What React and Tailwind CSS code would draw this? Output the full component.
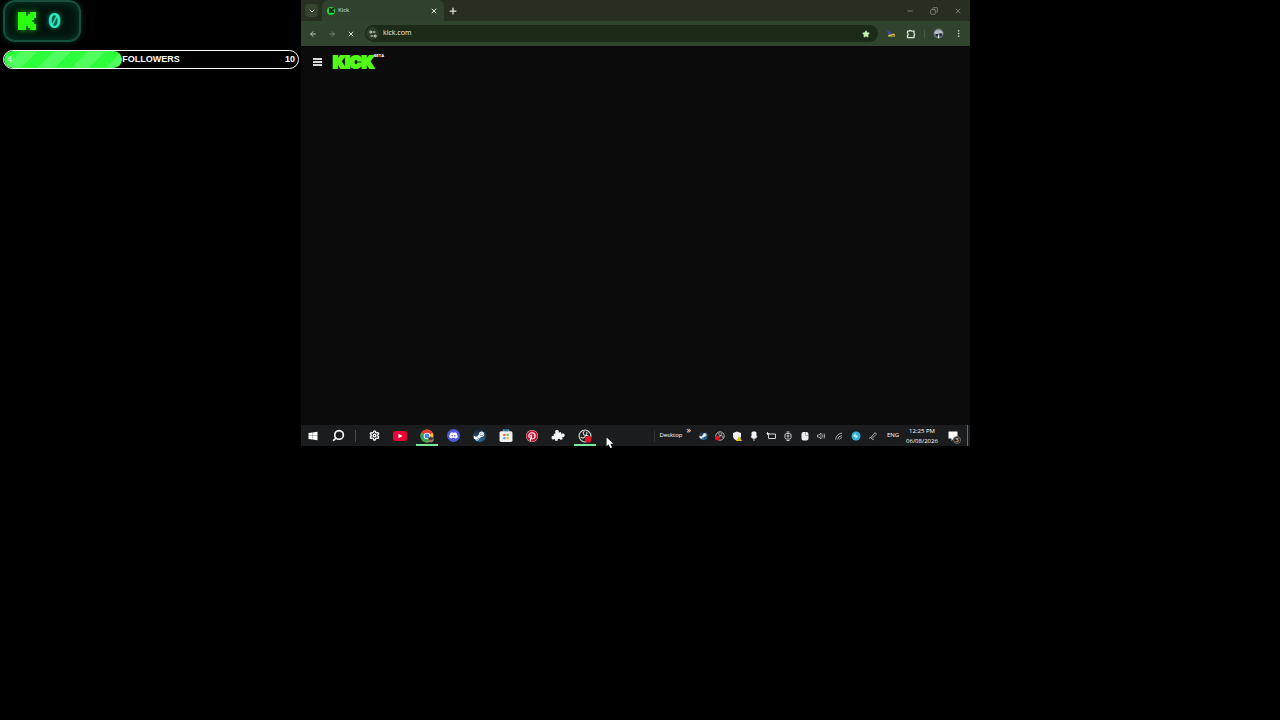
import {
  ArrowLeft,
  ArrowRight,
  ChevronDown,
  Copy,
  MoreVertical,
  Minus,
  Plus,
  Search,
  Settings,
  Star,
  X,
} from "lucide-react";
import { FaDiscord, FaPinterest, FaSteamSymbol } from "react-icons/fa";
import clsx from "clsx";

// Blocky square mark used in the counter and as the tab icon
function KickMark({ className }) {
  return (
    <svg viewBox="0 0 9 9" className={className} fill="currentColor" aria-hidden="true">
      <path d="M0 0h4v2h1V1h1V0h3v3H8v1H7v1h1v1h1v3H6V8H5V7H4v2H0z" />
    </svg>
  );
}

function ChromeIcon() {
  return (
    <svg viewBox="0 0 26 26" className="size-[14px]" aria-hidden="true">
      <circle cx="13" cy="13" r="12" fill="#fbc116" />
      <path d="M13 13 2.6 7a12 12 0 0 1 20.8 0z" fill="#e33b2e" />
      <path d="M13 13 2.6 7A12 12 0 0 0 13 25l5-9z" fill="#2da94f" />
      <circle cx="13" cy="13" r="6" fill="#fff" />
      <circle cx="13" cy="13" r="4.6" fill="#4285f4" />
      <circle cx="20" cy="19.500" r="5.500" fill="#8b7b63" />
      <path d="M16 18q4-5 8 0l-1 2h-6z" fill="#34302c" />
    </svg>
  );
}

function YoutubeIcon() {
  return (
    <svg viewBox="0 0 28 20" className="w-[14px]" aria-hidden="true">
      <rect width="28" height="20" rx="5" fill="#e8033a" />
      <path d="M11 5.500v9l8-4.500z" fill="#fff" />
    </svg>
  );
}

function StoreIcon() {
  return (
    <svg viewBox="0 0 26 26" className="size-[14px]" aria-hidden="true">
      <path d="M8 5V2h10v3" fill="none" stroke="#4bb3e6" strokeWidth="2" />
      <rect x="1" y="4" width="24" height="20" rx="3" fill="#f1f1f1" />
      <path d="M8 9h4v4H8z" fill="#e8623a" />
      <path d="M14 9h4v4h-4z" fill="#7fae4a" />
      <path d="M8 15h4v4H8z" fill="#4d9bd0" />
      <path d="M14 15h4v4h-4z" fill="#e5b53a" />
    </svg>
  );
}

// Solid puzzle piece, tilted
function PuzzleIcon() {
  return (
    <svg viewBox="0 0 26 26" className="size-[14px]" fill="#f4f4f4" aria-hidden="true">
      <g transform="rotate(-14 13 13)">
        <rect x="6" y="7" width="14" height="14" rx="1" />
        <circle cx="13" cy="5" r="3.5" />
        <circle cx="22" cy="14" r="3.5" />
        <circle cx="4" cy="14" r="3.5" />
        <circle cx="13" cy="21" r="2.5" fill="#1b1c1d" />
      </g>
    </svg>
  );
}

function WindowsIcon() {
  return (
    <svg viewBox="0 0 20 20" className="size-[10px]" fill="#fff" aria-hidden="true">
      <path d="M1 4 8.500 3v6.600H1zM9 2.900 19 1.500v8.100H9zM1 10.200h7.500V17L1 16zM9 10.200h10v8.300L9 17.100z" />
    </svg>
  );
}

function ObsIcon({ small }) {
  return (
    <svg viewBox="0 0 26 26" className={small ? "size-[10px]" : "size-[14px]"} aria-hidden="true">
      <circle cx="13" cy="13" r="11" fill="#232225" stroke="#d8d8d8" strokeWidth="2" />
      <path
        d="M12 4c-4 3-2 8 2 8 4-1 7 2 7 6M14 12c-1 5-6 6-9 3M14 12c3-2 3-5 2-7"
        fill="none"
        stroke="#d8d8d8"
        strokeWidth="2"
      />
      <circle cx={small ? 6 : 19} cy="19" r="6" fill="#e3141e" />
    </svg>
  );
}

function SteamIcon({ small }) {
  return (
    <span
      className={clsx(
        "flex items-center justify-center rounded-full bg-linear-to-b from-[#17202c] to-[#1f6fa8] text-white",
        small ? "size-[9px]" : "size-[13px]"
      )}
    >
      <FaSteamSymbol className={small ? "size-2" : "size-3"} />
    </span>
  );
}

const line = { fill: "none", stroke: "currentColor", strokeWidth: 2 };

function TraySvg({ children }) {
  return (
    <svg viewBox="0 0 20 20" className="size-[10px] text-[#d0d0d0]" aria-hidden="true">
      {children}
    </svg>
  );
}

const apps = [
  { name: "Settings", icon: <Settings className="size-[11px] text-white" strokeWidth={3} /> },
  { name: "YouTube", icon: <YoutubeIcon /> },
  { name: "Chrome", icon: <ChromeIcon />, open: true },
  {
    name: "Discord",
    icon: (
      <span className="flex size-[13px] items-center justify-center rounded-full bg-[#5058d8] text-white">
        <FaDiscord className="size-[9px]" />
      </span>
    ),
  },
  { name: "Steam", icon: <SteamIcon /> },
  { name: "Store", icon: <StoreIcon /> },
  {
    name: "Pinterest",
    icon: <FaPinterest className="size-3 rounded-full bg-white text-[#c8102e]" />,
  },
  { name: "Extensions", icon: <PuzzleIcon /> },
  { name: "OBS Studio", icon: <ObsIcon />, open: true },
];

const tray = [
  { name: "Steam", icon: <SteamIcon small /> },
  { name: "OBS", icon: <ObsIcon small /> },
  {
    name: "Security",
    icon: (
      <TraySvg>
        <path d="M10 1 2 4v6c0 5 4 8 8 9 4-1 8-4 8-9V4z" fill="#f0f0f0" />
        <path d="m14 10 6 10H8z" fill="#e8c81c" />
      </TraySvg>
    ),
  },
  {
    name: "Microphone",
    icon: (
      <TraySvg>
        <rect x="5" y="1" width="10" height="13" rx="3" fill="#f4f4f4" />
        <path d="M4 10q0 5 6 5t6-5M10 15v5" {...line} />
      </TraySvg>
    ),
  },
  {
    name: "Display",
    icon: (
      <TraySvg>
        <path d="M5 6h14v9H5zM1 5h6M3 2v6" {...line} />
      </TraySvg>
    ),
  },
  {
    name: "Meet now",
    icon: (
      <TraySvg>
        <rect x="4" y="5" width="12" height="11" rx="3" {...line} />
        <path d="M7 2h6M7 19h6" {...line} />
        <circle cx="10" cy="10" r="2" {...line} />
      </TraySvg>
    ),
  },
  {
    name: "Mouse",
    icon: (
      <TraySvg>
        <rect x="3" y="2" width="14" height="17" rx="4" fill="#eeeeee" />
        <path d="M11 2v7h6" fill="none" stroke="#777" strokeWidth="1" />
      </TraySvg>
    ),
  },
  {
    name: "Volume",
    icon: (
      <TraySvg>
        <path d="M1 8h3l4-4v12l-4-4H1zM11 7q2 3 0 6M14 5q3 5 0 10" {...line} strokeWidth="1.500" />
      </TraySvg>
    ),
  },
  {
    name: "Network",
    icon: (
      <TraySvg>
        <path d="M3 17Q5 6 16 4M7 17q1-7 9-8M11 17q1-3 5-4" {...line} strokeWidth="1.500" />
      </TraySvg>
    ),
  },
  {
    name: "Sync",
    icon: (
      <TraySvg>
        <circle cx="10" cy="10" r="9" fill="#35afd6" />
        <path d="m4 11 5-7v5h5l-5 7v-5z" fill="#d9f4ff" />
      </TraySvg>
    ),
  },
  {
    name: "Pen",
    icon: (
      <TraySvg>
        <path d="m6 13 8-10 3 3-9 9zM2 15q3-4 5 0t5 1" {...line} strokeWidth="1.500" />
      </TraySvg>
    ),
  },
];

function StreamWidgets() {
  const followers = 4;
  const goal = 10;

  return (
    <aside className="pl-[3px] pr-[2px] font-['Liberation_Sans',sans-serif]">
      <div className="flex h-[42px] w-[78px] items-center gap-3 rounded-xl border-2 border-[#174f3d] bg-[#02120c] pl-[13px] shadow-[inset_0_0_10px_#06412d,0_0_6px_#04301f]">
        <KickMark className="size-[18px] text-[#2bff10] drop-shadow-[0_0_3px_#18c018]" />
        <span className="font-['Inter',sans-serif] text-xl font-semibold text-[#2fe8bd] slashed-zero [text-shadow:0_0_5px_#12a884]">
          0
        </span>
      </div>
      <div
        role="progressbar"
        aria-label="Followers"
        aria-valuenow={followers}
        aria-valuemax={goal}
        className="mt-2 grid h-[19px] overflow-hidden rounded-full border border-white text-[9px] font-bold text-white"
      >
        <div
          className="col-start-1 row-start-1 rounded-full bg-[repeating-linear-gradient(135deg,#2dff3c_0_12px,#50ff5e_12px_24px)]"
          style={{ width: `${(followers / goal) * 100}%` }}
        />
        <div className="col-start-1 row-start-1 grid grid-cols-3 items-center px-[3px]">
          <span className="text-[#c8ffcb]">{followers}</span>
          <span className="text-center">FOLLOWERS</span>
          <span className="text-right">{goal}</span>
        </div>
      </div>
    </aside>
  );
}

function TabStrip() {
  return (
    <div className="flex h-[21px] items-center bg-[#262f20] text-[#dfe8da]">
      <button
        aria-label="Search tabs"
        className="ml-1 flex size-[13px] items-center justify-center rounded bg-[#35432f]"
      >
        <ChevronDown className="size-2" strokeWidth={3} />
      </button>
      <div className="ml-1 flex h-full w-[122px] items-center rounded-t-md bg-[#30412d] pl-[5px] pr-[6px]">
        <span className="flex size-2 items-center justify-center rounded-full bg-[#23d82b] text-[#102810]">
          <KickMark className="size-[5px]" />
        </span>
        <span className="ml-[3px] flex-1 text-[6px]">Kick</span>
        <button aria-label="Close tab">
          <X className="size-2" strokeWidth={3} />
        </button>
      </div>
      <button aria-label="New tab" className="ml-1">
        <Plus className="size-[10px]" strokeWidth={3} />
      </button>
      <div className="ml-auto flex gap-4 pr-2 text-[#9ea698]">
        <button aria-label="Minimize">
          <Minus className="size-2" strokeWidth={2} />
        </button>
        <button aria-label="Restore">
          <Copy className="size-2 -scale-x-100" strokeWidth={2} />
        </button>
        <button aria-label="Close window">
          <X className="size-2" strokeWidth={2} />
        </button>
      </div>
    </div>
  );
}

function Toolbar() {
  return (
    <div className="flex h-[25px] items-center bg-[#30432c] pr-[7px] text-[#dbe5d5]">
      <div className="flex w-16 items-center gap-[11px] pl-2">
        <button aria-label="Back">
          <ArrowLeft className="size-2 text-[#b5c2ae]" strokeWidth={3} />
        </button>
        <button aria-label="Forward">
          <ArrowRight className="size-2 text-[#6f8069]" strokeWidth={3} />
        </button>
        <button aria-label="Stop">
          <X className="size-2" strokeWidth={3} />
        </button>
      </div>
      <div className="flex h-[17px] flex-1 items-center rounded-full bg-[#1b2b18] pl-px pr-2">
        <span className="flex size-[13px] items-center justify-center rounded-full bg-[#283b24]">
          <svg viewBox="0 0 16 16" className="size-2" {...line} aria-hidden="true">
            <path d="M7 4h6M3 12h6" />
            <circle cx="3.500" cy="4" r="2" />
            <circle cx="12.500" cy="12" r="2" />
          </svg>
        </span>
        <input
          aria-label="Address"
          defaultValue="kick.com"
          className="ml-1 min-w-0 flex-1 bg-transparent text-[7px] text-[#eef4ea] outline-none"
        />
        <button aria-label="Bookmark">
          <Star className="size-2 fill-[#c4f5ac] text-[#c4f5ac]" />
        </button>
      </div>
      <div className="ml-2 flex items-center">
        <button aria-label="Extension">
          <svg viewBox="0 0 20 20" className="size-[10px]" aria-hidden="true">
            <path d="m2 2 10 7-7 3z" fill="#4549a8" />
            <path d="m5 12 12-3 1 6H4z" fill="#e8c84c" />
            <path d="m9 14 6-2 1 2z" fill="#50401a" />
          </svg>
        </button>
        <button aria-label="Extensions" className="ml-[10px]">
          <svg viewBox="0 0 20 20" className="size-[10px]" {...line} strokeWidth="2.500" aria-hidden="true">
            <path d="M3 4h4q1-3 4 0h5v5q3 2 0 4v4H3v-4q3-2 0-5z" />
          </svg>
        </button>
        <span className="ml-2 h-2 w-px bg-[#45603f]" />
        <button aria-label="Profile" className="ml-2">
          <svg viewBox="0 0 20 20" className="size-[11px]" aria-hidden="true">
            <circle cx="10" cy="10" r="9" fill="#6f7788" />
            <path d="M2 8q8-9 16 0l-1 3-5-2-7 3z" fill="#b7bdc8" />
            <path d="M5 11h4v4H5zM12 10h4v5h-4z" fill="#20242c" />
            <path d="M9 13h2v6H9z" fill="#dfe3ea" />
          </svg>
        </button>
        <button aria-label="Menu" className="ml-[10px]">
          <MoreVertical className="size-[9px]" strokeWidth={2} />
        </button>
      </div>
    </div>
  );
}

function KickPage() {
  return (
    <main className="min-h-0 flex-1 bg-[#0b0b0b]">
      <header className="flex h-8 items-center pl-3">
        <button aria-label="Open menu" className="flex w-[9px] flex-col gap-px">
          <span className="h-[2px] bg-[#d8d8d8]" />
          <span className="h-[2px] bg-[#d8d8d8]" />
          <span className="h-[2px] bg-[#d8d8d8]" />
        </button>
        <a href="#home" className="ml-[11px] flex items-start leading-none text-[#53fc18]">
          <span className="font-['Inter',sans-serif] text-base font-black leading-4 [-webkit-text-stroke:2px_#53fc18]">
            KICK
          </span>
          <span className="text-[4px] font-bold leading-[4px] text-white">BETA</span>
        </a>
      </header>
    </main>
  );
}

function Taskbar() {
  return (
    <footer className="relative flex h-[21px] items-center bg-[#1b1c1d] text-[6px] text-white">
      <button aria-label="Start" className="flex w-6 justify-center">
        <WindowsIcon />
      </button>
      <button aria-label="Search" className="flex w-[26px] justify-center">
        <Search className="size-[13px] -scale-x-100" strokeWidth={3} />
      </button>
      <span className="mx-1 h-3 w-px bg-[#4b4b4b]" />
      <nav className="ml-px grid h-full w-[237px] grid-cols-9">
        {apps.map((app) => (
          <button
            key={app.name}
            aria-label={app.name}
            className="relative flex items-center justify-center"
          >
            {app.icon}
            {app.open && <span className="absolute inset-x-[2px] bottom-0 h-[2px] bg-[#7be69c]" />}
          </button>
        ))}
      </nav>
      <svg viewBox="0 0 12 18" className="absolute left-[305px] top-3 h-[11px]" aria-hidden="true">
        <path d="M1 1v14l3-3 3 6 3-1-3-6h5z" fill="#fff" />
      </svg>
      <div className="ml-auto flex h-full items-center">
        <span className="h-3 w-px bg-[#333]" />
        <span className="ml-1">Desktop</span>
        <button aria-label="Show more" className="mx-1 mb-3 text-[9px] leading-none">
          »
        </button>
        <div className="grid w-[186px] grid-cols-11 items-center">
          {tray.map((item) => (
            <button key={item.name} aria-label={item.name} className="flex justify-center">
              {item.icon}
            </button>
          ))}
        </div>
        <span className="w-6 text-center">ENG</span>
        <time className="w-[34px] text-center leading-[10px]">
          12:25 PM
          <br />
          06/08/2026
        </time>
        <button aria-label="Notifications" className="relative flex w-7 justify-center">
          <svg viewBox="0 0 20 20" className="size-[10px]" aria-hidden="true">
            <path d="M1 1h18v14h-8l-4 5v-5H1z" fill="#fff" />
          </svg>
          <span className="absolute right-[6px] -bottom-[3px] flex size-2 items-center justify-center rounded-full border border-[#777] bg-[#1b1c1d] leading-none">
            3
          </span>
        </button>
        <span className="mr-[2px] h-full w-px bg-[#6a6a6a]" />
      </div>
    </footer>
  );
}

export default function App() {
  return (
    <div className="grid min-h-screen grid-cols-[301fr_669fr_310fr] items-start bg-black">
      <StreamWidgets />
      <section className="flex aspect-[3/2] min-w-0 flex-col font-['Open_Sans',sans-serif]">
        <TabStrip />
        <Toolbar />
        <KickPage />
        <Taskbar />
      </section>
    </div>
  );
}
